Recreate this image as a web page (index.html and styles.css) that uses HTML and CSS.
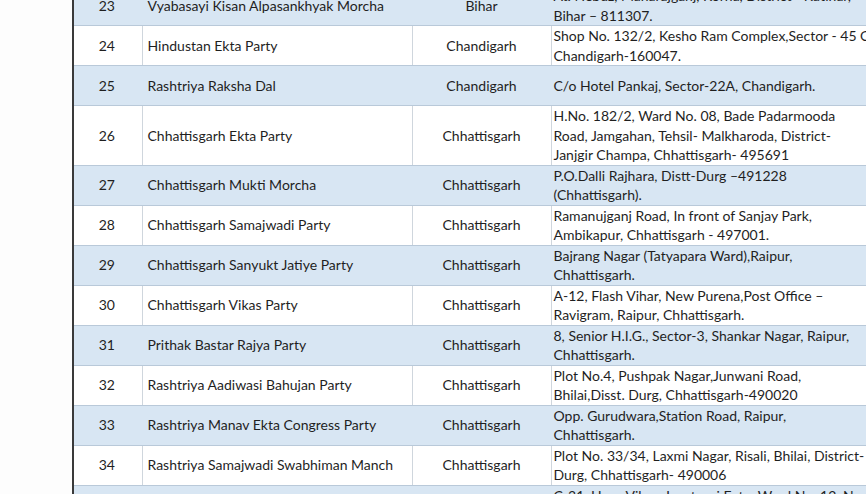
FILE: index.html
```html
<!DOCTYPE html>
<html>
<head>
<meta charset="utf-8">
<link rel="stylesheet" href="styles.css">
</head>
<body>
<div class="page">
<table class="parties">
<colgroup>
<col class="c-no"><col class="c-name"><col class="c-state"><col class="c-addr">
</colgroup>
<tbody>
<tr class="blue"><td class="no">23</td><td class="name">Vyabasayi Kisan Alpasankhyak Morcha</td><td class="state">Bihar</td><td class="addr">At. Nebuz, Manarajganj, Korha, District - Katihar,<br>Bihar – 811307.</td></tr>
<tr><td class="no">24</td><td class="name">Hindustan Ekta Party</td><td class="state">Chandigarh</td><td class="addr">Shop No. 132/2, Kesho Ram Complex,Sector - 45 C,<br>Chandigarh-160047.</td></tr>
<tr class="blue"><td class="no">25</td><td class="name">Rashtriya Raksha Dal</td><td class="state">Chandigarh</td><td class="addr">C/o Hotel Pankaj, Sector-22A, Chandigarh.</td></tr>
<tr><td class="no">26</td><td class="name">Chhattisgarh Ekta Party</td><td class="state">Chhattisgarh</td><td class="addr">H.No. 182/2, Ward No. 08, Bade Padarmooda<br>Road, Jamgahan, Tehsil- Malkharoda, District-<br>Janjgir Champa, Chhattisgarh- 495691</td></tr>
<tr class="blue"><td class="no">27</td><td class="name">Chhattisgarh Mukti Morcha</td><td class="state">Chhattisgarh</td><td class="addr">P.O.Dalli Rajhara, Distt-Durg –491228<br>(Chhattisgarh).</td></tr>
<tr><td class="no">28</td><td class="name">Chhattisgarh Samajwadi Party</td><td class="state">Chhattisgarh</td><td class="addr">Ramanujganj Road, In front of Sanjay Park,<br>Ambikapur, Chhattisgarh - 497001.</td></tr>
<tr class="blue"><td class="no">29</td><td class="name">Chhattisgarh Sanyukt Jatiye Party</td><td class="state">Chhattisgarh</td><td class="addr">Bajrang Nagar (Tatyapara Ward),Raipur,<br>Chhattisgarh.</td></tr>
<tr><td class="no">30</td><td class="name">Chhattisgarh Vikas Party</td><td class="state">Chhattisgarh</td><td class="addr">A-12, Flash Vihar, New Purena,Post Office –<br>Ravigram, Raipur, Chhattisgarh.</td></tr>
<tr class="blue"><td class="no">31</td><td class="name">Prithak Bastar Rajya Party</td><td class="state">Chhattisgarh</td><td class="addr">8, Senior H.I.G., Sector-3, Shankar Nagar, Raipur,<br>Chhattisgarh.</td></tr>
<tr><td class="no">32</td><td class="name">Rashtriya Aadiwasi Bahujan Party</td><td class="state">Chhattisgarh</td><td class="addr">Plot No.4, Pushpak Nagar,Junwani Road,<br>Bhilai,Disst. Durg, Chhattisgarh-490020</td></tr>
<tr class="blue"><td class="no">33</td><td class="name">Rashtriya Manav Ekta Congress Party</td><td class="state">Chhattisgarh</td><td class="addr">Opp. Gurudwara,Station Road, Raipur,<br>Chhattisgarh.</td></tr>
<tr><td class="no">34</td><td class="name">Rashtriya Samajwadi Swabhiman Manch</td><td class="state">Chhattisgarh</td><td class="addr">Plot No. 33/34, Laxmi Nagar, Risali, Bhilai, District-<br>Durg, Chhattisgarh- 490006</td></tr>
<tr class="blue"><td class="no">35</td><td class="name">Rashtriya Janhit Party</td><td class="state">Delhi</td><td class="addr">C-31, Hans Vihar, Jagatpuri Extn, Ward No. 12, New Delhi<br>Delhi-110051</td></tr>
</tbody>
</table>
</div>
</body>
</html>
```

FILE: styles.css
```css
html, body {
  margin: 0;
  padding: 0;
  background: #fdfdfd;
  overflow: hidden;
}

.page {
  width: 866px;
  height: 494px;
  overflow: hidden;
  padding-left: 72px;
  box-sizing: border-box;
}

.parties {
  margin-top: -15px;
  border-collapse: collapse;
  table-layout: fixed;
  width: 880px;
  font-family: Lato, "Open Sans", sans-serif;
  font-size: 14px;
  line-height: 19.5px;
  color: #1f1f1f;
  border-left: 2px solid #3a3a3a;
}

.c-no { width: 69px; }
.c-name { width: 270px; }
.c-state { width: 139px; }
.c-addr { width: 402px; }

.parties td {
  padding: 0 2px;
  vertical-align: middle;
  border-top: 1px solid #b9c9d9;
  border-bottom: 1px solid #b9c9d9;
  border-left: 1px solid #cfd6dd;
  height: 39px;
  white-space: nowrap;
  overflow: hidden;
  background: #ffffff;
}

.parties tr.blue td {
  background: #d8e6f3;
  border-left-color: #d8e6f3;
}

.parties td.no { text-align: center; padding-right: 4px; }
.parties td.name { text-align: left; padding-left: 5px; }
.parties td.state { text-align: center; }
.parties td.addr { text-align: left; padding-left: 2px; }
```
